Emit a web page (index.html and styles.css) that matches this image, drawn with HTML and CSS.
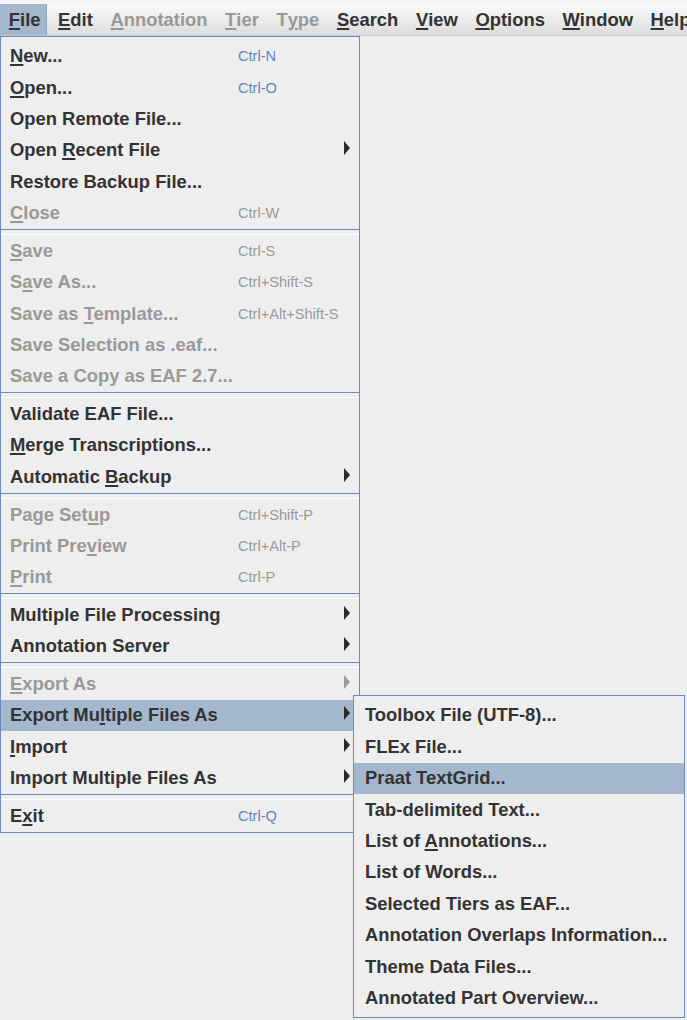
FILE: index.html
```html
<!DOCTYPE html>
<html>
<head>
<meta charset="utf-8">
<link rel="stylesheet" href="styles.css">
</head>
<body>
<div class="frame-top"></div>
<nav class="menubar">
  <span class="mb-item active"><u>F</u>ile</span>
  <span class="mb-item"><u>E</u>dit</span>
  <span class="mb-item disabled"><u>A</u>nnotation</span>
  <span class="mb-item disabled"><u>T</u>ier</span>
  <span class="mb-item disabled">T<u>y</u>pe</span>
  <span class="mb-item"><u>S</u>earch</span>
  <span class="mb-item"><u>V</u>iew</span>
  <span class="mb-item"><u>O</u>ptions</span>
  <span class="mb-item"><u>W</u>indow</span>
  <span class="mb-item"><u>H</u>elp</span>
</nav>
<div class="menu main">
  <div class="item"><span class="label"><u>N</u>ew...</span><span class="accel">Ctrl-N</span></div>
  <div class="item"><span class="label"><u>O</u>pen...</span><span class="accel">Ctrl-O</span></div>
  <div class="item"><span class="label">Open Remote File...</span></div>
  <div class="item"><span class="label">Open <u>R</u>ecent File</span><span class="arrow"></span></div>
  <div class="item"><span class="label">Restore Backup File...</span></div>
  <div class="item disabled"><span class="label"><u>C</u>lose</span><span class="accel">Ctrl-W</span></div>
  <div class="sep"></div>
  <div class="item disabled"><span class="label"><u>S</u>ave</span><span class="accel">Ctrl-S</span></div>
  <div class="item disabled"><span class="label">S<u>a</u>ve As...</span><span class="accel">Ctrl+Shift-S</span></div>
  <div class="item disabled"><span class="label">Save as <u>T</u>emplate...</span><span class="accel">Ctrl+Alt+Shift-S</span></div>
  <div class="item disabled"><span class="label">Save Selection as .eaf...</span></div>
  <div class="item disabled"><span class="label">Save a Copy as EAF 2.7...</span></div>
  <div class="sep"></div>
  <div class="item"><span class="label">Validate EAF File...</span></div>
  <div class="item"><span class="label"><u>M</u>erge Transcriptions...</span></div>
  <div class="item"><span class="label">Automatic <u>B</u>ackup</span><span class="arrow"></span></div>
  <div class="sep"></div>
  <div class="item disabled"><span class="label">Page Set<u>u</u>p</span><span class="accel">Ctrl+Shift-P</span></div>
  <div class="item disabled"><span class="label">Print Pre<u>v</u>iew</span><span class="accel">Ctrl+Alt-P</span></div>
  <div class="item disabled"><span class="label"><u>P</u>rint</span><span class="accel">Ctrl-P</span></div>
  <div class="sep"></div>
  <div class="item"><span class="label">Multiple File Processing</span><span class="arrow"></span></div>
  <div class="item"><span class="label">Annotation Server</span><span class="arrow"></span></div>
  <div class="sep"></div>
  <div class="item disabled"><span class="label"><u>E</u>xport As</span><span class="arrow"></span></div>
  <div class="item selected has-sub"><span class="label">Export Mu<u>l</u>tiple Files As</span><span class="arrow"></span>
    <div class="menu submenu">
      <div class="item"><span class="label">Toolbox File (UTF-8)...</span></div>
      <div class="item"><span class="label">FLEx File...</span></div>
      <div class="item selected"><span class="label">Praat TextGrid...</span></div>
      <div class="item"><span class="label">Tab-delimited Text...</span></div>
      <div class="item"><span class="label">List of <u>A</u>nnotations...</span></div>
      <div class="item"><span class="label">List of Words...</span></div>
      <div class="item"><span class="label">Selected Tiers as EAF...</span></div>
      <div class="item"><span class="label">Annotation Overlaps Information...</span></div>
      <div class="item"><span class="label">Theme Data Files...</span></div>
      <div class="item"><span class="label">Annotated Part Overview...</span></div>
    </div>
  </div>
  <div class="item"><span class="label"><u>I</u>mport</span><span class="arrow"></span></div>
  <div class="item"><span class="label">Import Multiple Files As</span><span class="arrow"></span></div>
  <div class="sep"></div>
  <div class="item"><span class="label">E<u>x</u>it</span><span class="accel">Ctrl-Q</span></div>
</div>
</body>
</html>
```
FILE: styles.css
```css
html, body {
  margin: 0;
  padding: 0;
  background: #eeeeee;
  font-family: "Liberation Sans", Arial, sans-serif;
  font-size: 18.4px;
  font-weight: bold;
  color: #333333;
}

body {
  min-height: 1020px;
}

u {
  text-decoration-thickness: 2px;
  text-underline-offset: 2px;
}

.frame-top {
  height: 4px;
  background: #f4f6f9;
}

.menubar {
  display: flex;
  height: 31px;
  background: linear-gradient(to bottom, #fbfbfb, #dcdcdc);
  border-bottom: 1px solid #c8c8c8;
  white-space: nowrap;
  overflow: hidden;
}

.mb-item {
  display: flex;
  align-items: center;
  padding: 1px 8.8px 0 8.8px;
  color: #333333;
}

.mb-item.active {
  background: #a3b8cc;
  box-shadow: inset -1px 0 0 #8fa4bb;
  padding-right: 6.8px;
  margin-right: 2px;
}

.mb-item.disabled {
  color: #999999;
}

.menu {
  box-sizing: border-box;
  background: #eeeeee;
  border: 1px solid #6f88c0;
}

.main {
  width: 360px;
  padding: 3.5px 0 0 0;
}

.item {
  display: flex;
  align-items: center;
  height: 31.4px;
  padding-left: 9px;
  white-space: nowrap;
}

.item .label {
  width: 228px;
  flex: none;
}

.accel {
  font-weight: normal;
  font-size: 14.6px;
  color: #6382bf;
}

.item.disabled {
  color: #999999;
}

.item.disabled .accel {
  color: #999999;
}

.arrow {
  margin-left: auto;
  margin-right: 9px;
  margin-bottom: 4px;
  width: 0;
  height: 0;
  border-top: 7px solid transparent;
  border-bottom: 7px solid transparent;
  border-left: 6px solid #2a2a2a;
}

.item.disabled .arrow {
  border-left-color: #9c9c9c;
}

.item.selected {
  background: #a3b8cc;
}

.sep {
  height: 4.3px;
  border-top: 1px solid #7088c0;
  border-bottom: 1px solid #ffffff;
  margin-top: 0;
}

.has-sub {
  position: relative;
}

.submenu {
  position: absolute;
  left: 352px;
  top: -5px;
  width: 332px;
  padding: 4px 0 3px 0;
}

.submenu .item {
  padding-left: 11px;
  color: #333333;
}

.submenu .item .label {
  width: auto;
}
```
